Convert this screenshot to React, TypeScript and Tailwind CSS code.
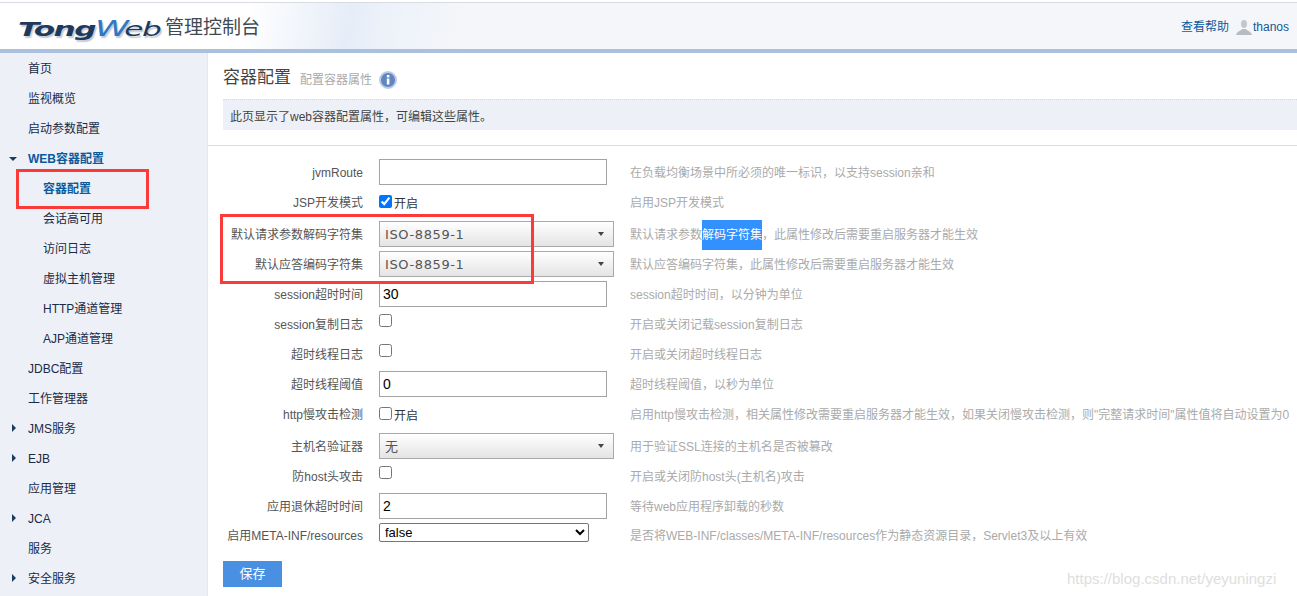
const sans = "font-['Liberation_Sans','Noto_Sans_CJK_SC',sans-serif]";

type NavItem = { label: string; sub?: boolean; arrow?: "down" | "right"; active?: boolean };

const navItems: NavItem[] = [
  { label: "首页" },
  { label: "监视概览" },
  { label: "启动参数配置" },
  { label: "WEB容器配置", arrow: "down", active: true },
  { label: "容器配置", sub: true, active: true },
  { label: "会话高可用", sub: true },
  { label: "访问日志", sub: true },
  { label: "虚拟主机管理", sub: true },
  { label: "HTTP通道管理", sub: true },
  { label: "AJP通道管理", sub: true },
  { label: "JDBC配置" },
  { label: "工作管理器" },
  { label: "JMS服务", arrow: "right" },
  { label: "EJB", arrow: "right" },
  { label: "应用管理" },
  { label: "JCA", arrow: "right" },
  { label: "服务" },
  { label: "安全服务", arrow: "right" },
];

function Sidebar() {
  return (
    <aside className="w-[208px] shrink-0 bg-[#edf1f7] border-r border-[#e4e8ee] pt-[1px] relative">
      {navItems.map((item) => (
        <div
          key={item.label}
          className={`h-[30px] leading-[30px] flex items-center relative ${item.sub ? "pl-[43px]" : "pl-[28px]"} ${
            item.active ? "text-[#0b5a9c] font-bold" : "text-[#1b2a45]"
          }`}
        >
          {item.arrow === "down" && (
            <span className="absolute left-[9px] top-[13px] w-0 h-0 border-x-[4px] border-x-transparent border-t-[4px] border-t-[#1b3a5c]" />
          )}
          {item.arrow === "right" && (
            <span className="absolute left-[12px] top-[10px] w-0 h-0 border-y-[4px] border-y-transparent border-l-[4px] border-l-[#1b3a5c]" />
          )}
          {item.label}
        </div>
      ))}
      {/* annotation */}
      <div className="absolute left-[16px] top-[116px] w-[133px] h-[40px] border-[3px] border-[#fb3a3a]" />
    </aside>
  );
}

function TextInput({ value }: { value?: string }) {
  return (
    <input
      readOnly
      value={value ?? ""}
      className="block w-[228px] h-[26px] border border-[#a3a3a3] bg-white px-[3px] text-[14px] text-black outline-none"
    />
  );
}

function FakeSelect({ value }: { value: string }) {
  return (
    <div className="w-[235px] h-[26px] border border-[#a9a9a9] bg-gradient-to-b from-white to-[#e4e4e4] flex items-center justify-between pl-[5px] pr-[9px] font-['DejaVu_Sans','Noto_Sans_CJK_SC',sans-serif] text-[13px] tracking-[0.6px] text-[#555]">
      <span className="pt-[1px]">{value}</span>
      <span className="w-0 h-0 border-x-[3.5px] border-x-transparent border-t-[4px] border-t-[#444]" />
    </div>
  );
}

function Check({ checked, label }: { checked?: boolean; label?: string }) {
  if (!label) {
    return <input type="checkbox" readOnly checked={!!checked} className="block w-[13px] h-[13px] mt-[-7px] ml-0" />;
  }
  return (
    <div className="flex items-start">
      <input type="checkbox" readOnly checked={!!checked} className="w-[13px] h-[13px] mt-[4px] ml-0" />
      <span className="ml-[2px] mt-[4px] text-[#333]">{label}</span>
    </div>
  );
}

type Row = { label: string; control: React.ReactNode; hint: React.ReactNode; h?: string };

const rows: Row[] = [
  { label: "jvmRoute", control: <TextInput />, hint: "在负载均衡场景中所必须的唯一标识，以支持session亲和" },
  { label: "JSP开发模式", control: <Check checked label="开启" />, hint: "启用JSP开发模式" },
  {
    label: "默认请求参数解码字符集",
    h: "h-[30px] mt-[2px]",
    control: <FakeSelect value="ISO-8859-1" />,
    hint: (
      <>
        默认请求参数
        <span className="inline-block h-[30px] leading-[30px] bg-[#3390ff] text-white">解码字符集</span>
        ，此属性修改后需要重启服务器才能生效
      </>
    ),
  },
  { label: "默认应答编码字符集", control: <FakeSelect value="ISO-8859-1" />, hint: "默认应答编码字符集，此属性修改后需要重启服务器才能生效" },
  { label: "session超时时间", control: <TextInput value="30" />, hint: "session超时时间，以分钟为单位" },
  { label: "session复制日志", control: <Check />, hint: "开启或关闭记载session复制日志" },
  { label: "超时线程日志", control: <Check />, hint: "开启或关闭超时线程日志" },
  { label: "超时线程阈值", control: <TextInput value="0" />, hint: "超时线程阈值，以秒为单位" },
  {
    label: "http慢攻击检测",
    control: <Check label="开启" />,
    hint: '启用http慢攻击检测，相关属性修改需要重启服务器才能生效，如果关闭慢攻击检测，则"完整请求时间"属性值将自动设置为0',
  },
  { label: "主机名验证器", h: "h-[30px] mt-[2px]", control: <FakeSelect value="无" />, hint: "用于验证SSL连接的主机名是否被篡改" },
  { label: "防host头攻击", control: <Check />, hint: "开启或关闭防host头(主机名)攻击" },
  { label: "应用退休超时时间", control: <TextInput value="2" />, hint: "等待web应用程序卸载的秒数" },
  {
    label: "启用META-INF/resources",
    h: "h-[28px]",
    control: (
      <select className="w-[210px] h-[19px] border border-[#767676] rounded-[2px] bg-white text-[13px] text-black pl-[1px] block mb-[5px]">
        <option>false</option>
      </select>
    ),
    hint: "是否将WEB-INF/classes/META-INF/resources作为静态资源目录，Servlet3及以上有效",
  },
];

export default function App() {
  return (
    <div className={`w-[1297px] h-[596px] overflow-hidden bg-white text-[12px] relative ${sans}`}>
      {/* top bar */}
      <header className="h-[51px] mt-[2px] border-t border-[#d8dce2] border-b-[4px] border-b-[#a9c1de] bg-[linear-gradient(100deg,#ffffff_0%,#ffffff_19%,#e6edf8_27%,#edf2fa_30%,#f5f6f9_36%,#f5f6f9_100%)] flex items-center justify-between">
        <div className="flex items-center pl-[18px] pt-[4px]">
          <span className="w-[147px] inline-block">
            <span className="font-['DejaVu_Sans',sans-serif] italic font-bold text-[20px] tracking-[-1px] text-[#1d3a5e] inline-block origin-left scale-x-[1.56] [text-shadow:1px_2px_1px_#c4c9d0] whitespace-nowrap">
              Tong<span className="text-[#2f78c8] font-normal text-[22px] tracking-[-3px]">W</span>
              <span className="font-normal">eb</span>
            </span>
          </span>
          <span className="text-[19px] text-[#3f4a55]">管理控制台</span>
        </div>
        <div className="flex items-center pr-[8px] pt-[2px] text-[#0b5a9c]">
          <span>查看帮助</span>
          <svg className="ml-[7px] mr-[1px]" width="16" height="16" viewBox="0 0 16 16">
            <ellipse cx="8" cy="5" rx="3" ry="4" fill="#c3c7cc" />
            <path d="M0 16c1-4 5-4 6-6h4c1 2 5 2 6 6z" fill="#b6bcc4" />
          </svg>
          <span>thanos</span>
        </div>
      </header>

      <div className="flex h-[543px]">
        <Sidebar />
        <main className="flex-1 min-w-0">
          <div className="pl-[15px] pt-[4px] flex items-center h-[46px]">
            <h1 className="text-[17px] text-[#444]">容器配置</h1>
            <span className="ml-[9px] text-[#aaa] mt-[3px]">配置容器属性</span>
            <svg className="ml-[7px] mt-[3px]" width="18" height="18" viewBox="0 0 18 18">
              <circle cx="9" cy="9" r="8" fill="#5f86c0" stroke="#bccbe2" strokeWidth="2" />
              <rect x="7.8" y="7.5" width="2.6" height="6" fill="#fff" />
              <rect x="7.8" y="4" width="2.6" height="2.4" fill="#fff" />
            </svg>
          </div>
          <div className="ml-[15px] h-[31px] leading-[35px] bg-[#edf1f7] border-t border-dotted border-[#d3d9e2] pl-[7px] text-[#444]">
            此页显示了web容器配置属性，可编辑这些属性。
          </div>
          <div className="mt-[15px] border-t border-[#dcdcdc] pt-[11px]">
            {rows.map((row) => (
              <div key={row.label} className={`flex items-center ${row.h ?? "h-[30px]"}`}>
                <label className="w-[155px] shrink-0 text-right text-[#555] pt-[2px]">{row.label}</label>
                <div className="w-[251px] ml-[16px] shrink-0">{row.control}</div>
                <div className="text-[#aaa] whitespace-nowrap pt-[2px]">{row.hint}</div>
              </div>
            ))}
            <button className="mt-[12px] ml-[15px] block w-[59px] h-[26px] bg-[#4a90e2] text-white text-[13px]">保存</button>
          </div>
        </main>
      </div>

      {/* annotation */}
      <div className="absolute left-[220px] top-[214px] w-[314px] h-[70px] border-[3px] border-[#fb3a3a]" />
      <span className="absolute left-[1067px] top-[568px] text-[15px] text-[#dedede]">https://blog.csdn.net/yeyuningzi</span>
    </div>
  );
}
